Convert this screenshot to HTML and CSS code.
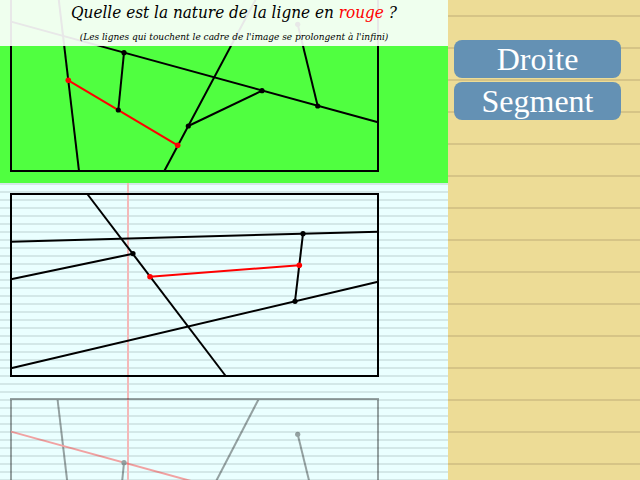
FILE: index.html
```html
<!DOCTYPE html>
<html lang="fr">
<head>
<meta charset="utf-8">
<title>Nature de la ligne</title>
<link rel="stylesheet" href="styles.css">
</head>
<body>
<div class="app">
  <div class="left">
    <div class="list">
      <div class="item selected">
        <svg class="fig" width="448" height="205" viewBox="0 0 448 205">
          <rect x="11" y="11" width="367" height="182" class="frame"/>
          <line x1="57.5" y1="11" x2="79" y2="193"/>
          <line x1="11" y1="43.6" x2="378" y2="144.3"/>
          <line x1="124" y1="74.7" x2="118.3" y2="132"/>
          <line x1="261.3" y1="11" x2="164.3" y2="193"/>
          <line x1="188.3" y1="148" x2="262" y2="112.7"/>
          <line x1="297.7" y1="46.3" x2="317.7" y2="128"/>
          <line x1="68.3" y1="102.3" x2="177.7" y2="167.3" class="red"/>
          <circle cx="124" cy="74.7" r="2.6"/>
          <circle cx="262" cy="112.7" r="2.6"/>
          <circle cx="317.7" cy="128" r="2.6"/>
          <circle cx="118.3" cy="132" r="2.6"/>
          <circle cx="188.3" cy="148" r="2.6"/>
          <circle cx="297.7" cy="46.3" r="2.6"/>
          <circle cx="68.3" cy="102.3" r="2.8" class="reddot"/>
          <circle cx="177.7" cy="167.3" r="2.8" class="reddot"/>
        </svg>
      </div>
      <div class="item">
        <svg class="fig" width="448" height="205" viewBox="0 0 448 205">
          <rect x="11" y="11" width="367" height="182" class="frame"/>
          <line x1="87.3" y1="11" x2="225.7" y2="193"/>
          <line x1="11" y1="58.7" x2="378" y2="48.7"/>
          <line x1="11" y1="96.3" x2="133" y2="70.7"/>
          <line x1="11" y1="185.3" x2="378" y2="98.7"/>
          <line x1="303" y1="50.7" x2="295" y2="118.3"/>
          <line x1="150" y1="93.7" x2="299.3" y2="82.3" class="red"/>
          <circle cx="133" cy="70.7" r="2.6"/>
          <circle cx="303" cy="50.7" r="2.6"/>
          <circle cx="295" cy="118.3" r="2.6"/>
          <circle cx="150" cy="93.7" r="2.8" class="reddot"/>
          <circle cx="299.3" cy="82.3" r="2.8" class="reddot"/>
        </svg>
      </div>
      <div class="item faded">
        <svg class="fig" width="448" height="205" viewBox="0 0 448 205">
          <rect x="11" y="11" width="367" height="182" class="frame"/>
          <line x1="57.5" y1="11" x2="79" y2="193"/>
          <line x1="124" y1="74.7" x2="118.3" y2="132"/>
          <line x1="258.7" y1="11" x2="164.3" y2="193"/>
          <line x1="188.3" y1="148" x2="262" y2="112.7"/>
          <line x1="297.7" y1="46.3" x2="317.7" y2="128"/>
          <line x1="11" y1="43.6" x2="378" y2="144.3" class="red"/>
          <circle cx="124" cy="74.7" r="2.6"/>
          <circle cx="262" cy="112.7" r="2.6"/>
          <circle cx="317.7" cy="128" r="2.6"/>
          <circle cx="118.3" cy="132" r="2.6"/>
          <circle cx="188.3" cy="148" r="2.6"/>
          <circle cx="297.7" cy="46.3" r="2.6"/>
        </svg>
      </div>
    </div>
    <div class="header">
      <div class="title">Quelle est la nature de la ligne en <span class="rouge">rouge</span> ?</div>
      <div class="subtitle">(Les lignes qui touchent le cadre de l'image se prolongent à l'infini)</div>
    </div>
  </div>
  <div class="right">
    <button class="choice">Droite</button>
    <button class="choice">Segment</button>
  </div>
</div>
</body>
</html>
```

FILE: styles.css
```css
html, body {
  margin: 0;
  padding: 0;
}
body {
  width: 640px;
  height: 480px;
  overflow: hidden;
  font-family: "Liberation Serif", serif;
}
.app {
  display: flex;
  width: 640px;
  height: 480px;
}
.left {
  position: relative;
  width: 448px;
  height: 480px;
  overflow: hidden;
  background-color: #eaffff;
  background-image:
    linear-gradient(to right, transparent 127px, #f4b9b9 127px, #f4b9b9 129px, transparent 129px),
    linear-gradient(to bottom, #d3e8e8 0, #d3e8e8 1px, transparent 1px, transparent 7px, #d3e8e8 7px, #d3e8e8 8px);
  background-size: 448px 480px, 448px 8px;
  background-repeat: no-repeat, repeat;
}
.list {
  display: flex;
  flex-direction: column;
  margin-top: -22px;
}
.item {
  height: 205px;
  flex: none;
}
.item.selected {
  background: #50ff40;
}
.fig {
  display: block;
}
.fig line, .fig .frame {
  stroke: #000;
  stroke-width: 2;
  fill: none;
}
.fig .red {
  stroke: #ff0000;
}
.fig circle {
  fill: #000;
}
.fig .reddot {
  fill: #ff0000;
}
.item.faded .fig {
  opacity: 0.36;
}
.header {
  position: absolute;
  top: 0;
  left: 0;
  width: 448px;
  height: 46px;
  background: rgba(255, 255, 255, 0.91);
  text-align: center;
  padding-left: 20px;
  box-sizing: border-box;
  font-family: "DejaVu Serif", serif;
  font-stretch: condensed;
  font-style: italic;
}
.title {
  font-size: 17px;
  line-height: 22px;
  padding-top: 1px;
  color: #000;
}
.rouge {
  color: #ff0000;
}
.subtitle {
  font-size: 10px;
  line-height: 14px;
  padding-top: 7px;
  color: #000;
}
.right {
  flex: 1;
  display: flex;
  flex-direction: column;
  align-items: flex-start;
  gap: 4px;
  padding: 40px 0 0 6px;
  background-color: #eddc96;
  background-image: repeating-linear-gradient(to bottom, transparent 0, transparent 15px, #d6c486 15px, #d6c486 17px, transparent 17px, transparent 32px);
}
.choice {
  width: 167px;
  height: 38px;
  border: none;
  border-radius: 8px;
  background: #6491b4;
  color: #fff;
  font-family: "Liberation Serif", serif;
  font-size: 32px;
  line-height: 38px;
  padding: 0;
  cursor: pointer;
}
```
